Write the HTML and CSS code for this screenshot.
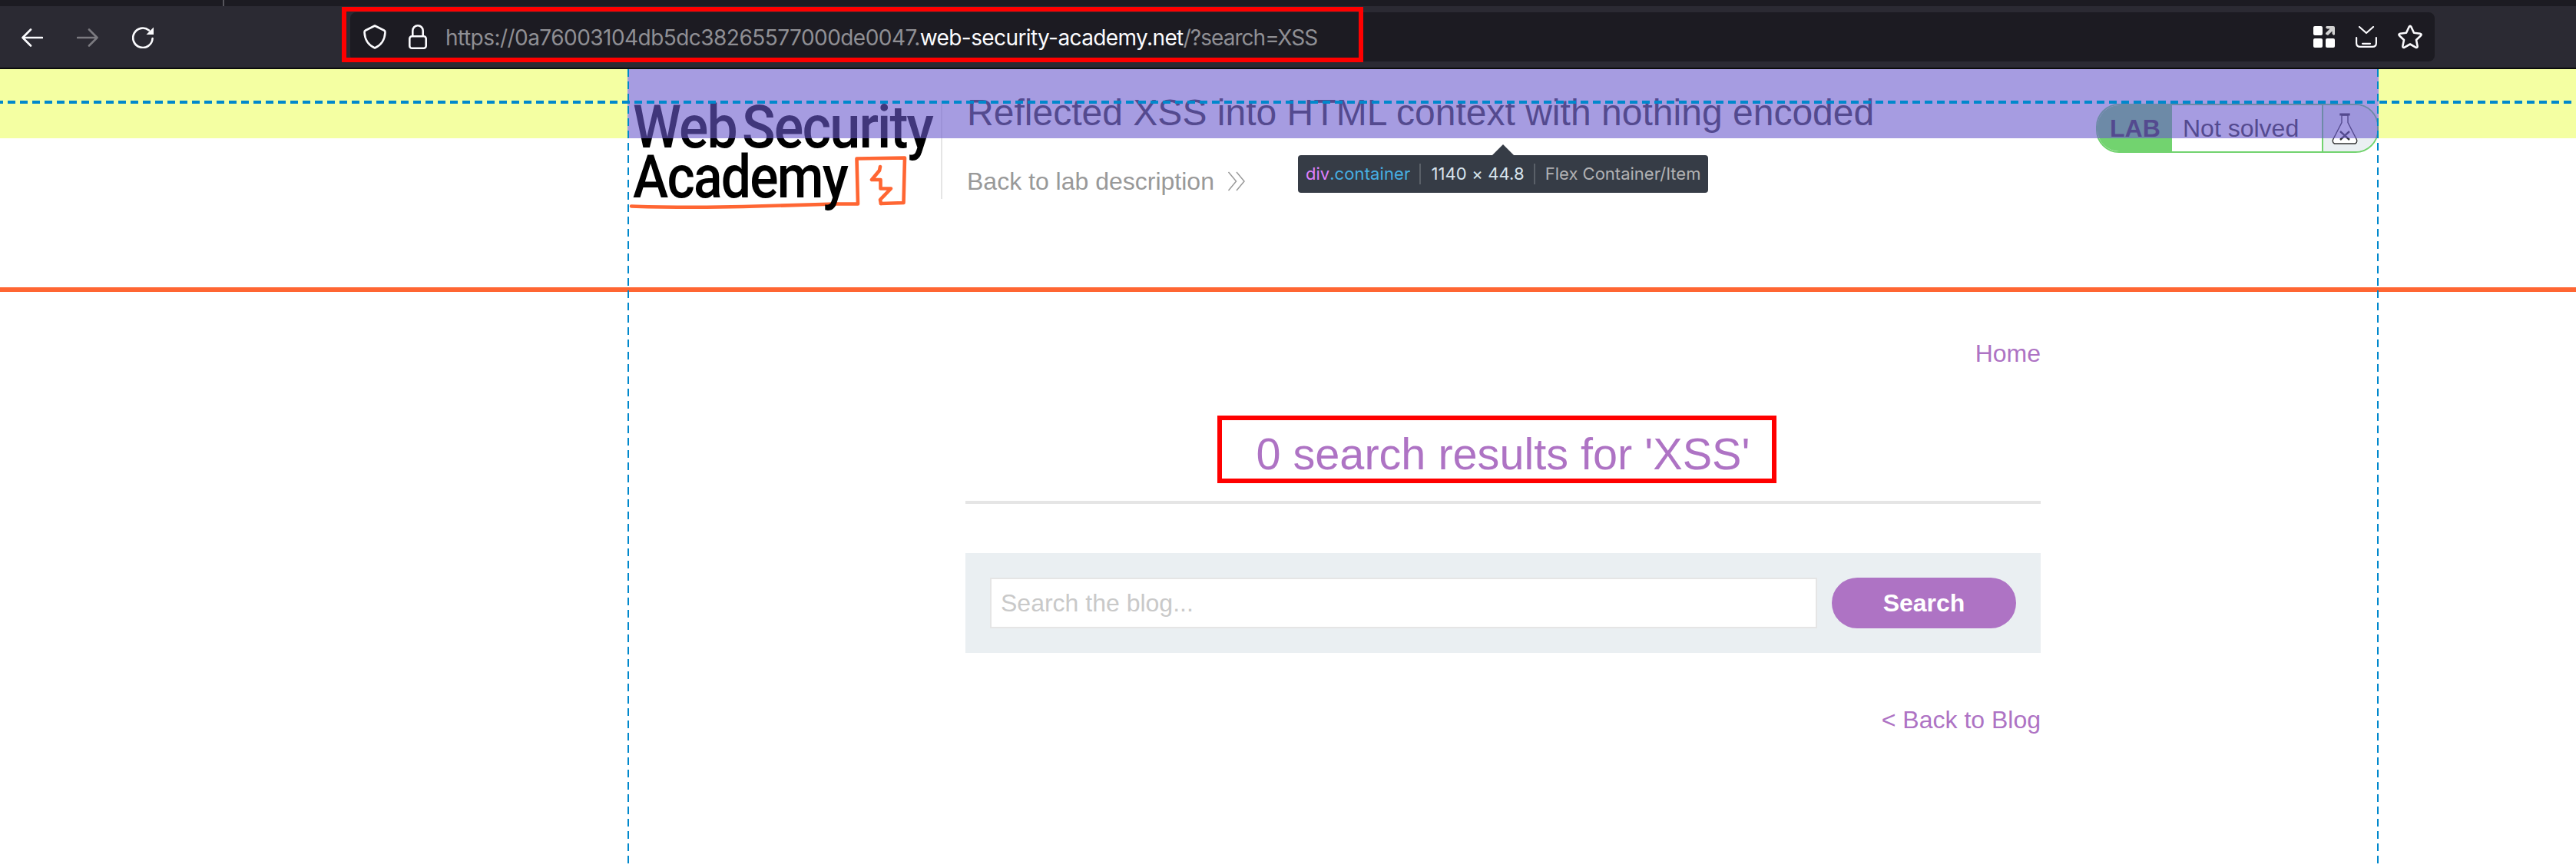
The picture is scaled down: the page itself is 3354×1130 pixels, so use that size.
FILE: index.html
```html
<!DOCTYPE html>
<html lang="en">
<head>
<meta charset="utf-8">
<title>Reflected XSS into HTML context with nothing encoded</title>
<link rel="stylesheet" href="styles.css">
</head>
<body>
<div class="tabstrip"><i class="tab-divider"></i></div>
<div class="toolbar">
  <div class="nav">
    <svg width="28" height="24" viewBox="0 0 28 24" fill="none" stroke="#fbfbfe" stroke-width="2.6" stroke-linecap="round" stroke-linejoin="round"><path d="M27 12H1.5M12 1.500L1.500 12L12 22.500"/></svg>
    <svg width="28" height="24" viewBox="0 0 28 24" fill="none" stroke="#7b7a80" stroke-width="2.6" stroke-linecap="round" stroke-linejoin="round"><path d="M1 12H26.500M16 1.500L26.500 12L16 22.500"/></svg>
    <svg width="28" height="28" viewBox="0 0 28 28" fill="none" stroke="#fbfbfe" stroke-width="2.600" stroke-linecap="round"><path d="M26.600 15A12.700 12.700 0 1 1 22 4.500"/><path d="M28 .5V10H18.500Z" fill="#fbfbfe" stroke="none"/></svg>
  </div>
  <div class="urlbar">
    <svg class="shield" width="30" height="32" viewBox="0 0 30 32" fill="none" stroke="#fbfbfe" stroke-width="2.600" stroke-linejoin="round"><path d="M15 1.500L27 7.500Q28.600 8.400 28.500 10C28 20 23 27 15 30.500C7 27 2 20 1.500 10Q1.400 8.400 3 7.500Z"/></svg>
    <svg class="lock" width="24" height="32" viewBox="0 0 24 32" fill="none" stroke="#fbfbfe" stroke-width="2.600"><rect x="1.300" y="15.300" width="21.400" height="15.400" rx="3"/><path d="M5.300 15V8a6.700 6.700 0 0 1 13.400 0v7"/></svg>
    <div class="url"><span class="u1">https://0a76003104db5dc38265577000de0047.</span><span class="u2">web-security-academy.net</span><span class="u3">/?search=XSS</span></div>
    <div class="actions">
      <svg width="28" height="28" viewBox="0 0 28 28" fill="#fff"><rect width="12" height="12" rx="2"/><rect y="16" width="12" height="12" rx="2"/><rect x="16" y="16" width="12" height="12" rx="2"/><path d="M17 0H26Q28 0 28 2V11L26.500 12L24.500 10V6.500L19 12L16 10.500V9L21.500 3.500H18L16 2Z" fill="#d0d0d0"/></svg>
      <svg width="28" height="28" viewBox="0 0 28 28" fill="none" stroke="#fbfbfe" stroke-width="2.200" stroke-linecap="round" stroke-linejoin="round"><path d="M5 1L14 9L23 1M1.100 15V22Q1.100 26.900 6 26.900H22Q26.900 26.900 26.900 22V15M9 22.800H19"/></svg>
      <svg width="32" height="32" viewBox="0 0 32 32" fill="none" stroke="#fbfbfe" stroke-width="2.600" stroke-linejoin="round"><path d="M14.600 3Q16 .7 17.400 3L21 10.800L29 11.800Q31.700 12.400 29.800 14.500L24 20L25.600 28Q25.700 30.700 23.300 29.700L16 25.500L8.700 29.700Q6.300 30.700 6.400 28L8 20L2.200 14.500Q.3 12.400 3 11.800L11 10.800Z"/></svg>
    </div>
    <div class="mark mark-url"></div>
  </div>
</div>
<div class="viewport">
  <header class="lab-header">
    <div class="container">
      <svg class="logo" width="408" height="146" viewBox="0 0 408 146">
        <g fill="none" stroke="#ff6633" stroke-linejoin="round" stroke-linecap="round">
          <path d="M5 133.500C40 135 110 135 150 134L271 130.500L300 130.500L298.500 71.500L361 70.500L359.500 129L330 130" stroke-width="4.600"/>
          <path d="M329 82L328 87L318 99H329.500V110.500H343L329 125L330 130" stroke-width="4.600"/>
        </g>
        <g class="logo-text">
          <text x="7" y="57" textLength="135" lengthAdjust="spacingAndGlyphs">Web</text>
          <text x="149" y="57" textLength="248" lengthAdjust="spacingAndGlyphs">Security</text>
          <text x="7" y="122" textLength="279" lengthAdjust="spacingAndGlyphs">Academy</text>
        </g>
      </svg>
      <div class="title-area">
        <h2>Reflected XSS into HTML context with nothing encoded</h2>
        <a class="back">Back to lab description<svg width="24" height="26" viewBox="0 0 24 26" fill="none" stroke="#999" stroke-width="1.500"><path d="M1.500 1L11.500 13L1.500 25M12 1L22 13L12 25"/></svg></a>
      </div>
      <div class="status">
        <b>LAB</b><span>Not solved</span>
        <i class="flask"><svg width="34" height="42" viewBox="0 0 34 42" fill="none" stroke="#333" stroke-width="1.400"><path fill="#fff" d="M3.500 40Q.5 38.500 1.500 35L13 12.500V3H21V12.500L32.500 35Q33.500 38.500 30.500 40Z"/><path fill="#fff" d="M11 1.200H23V2.800H11Z"/><path d="M11 24L23 35M23 24L11 35" stroke-width="2.400"/></svg></i>
      </div>
    </div>
  </header>
  <main>
    <nav><a>Home</a></nav>
    <section class="results"><h1>0 search results for 'XSS'</h1><div class="mark mark-results"></div></section>
    <form class="search"><div class="field">Search the blog...</div><div class="button">Search</div></form>
    <div class="backlink"><a>&lt; Back to Blog</a></div>
  </main>
  <div class="overlay">
    <div class="hl-margin"></div><div class="hl-content"></div>
    <div class="guide-h"></div><div class="guide-v guide-l"></div><div class="guide-v guide-r"></div>
    <div class="infobar"><span class="tag">div</span><span class="cls">.container</span><span class="dim">1140 × 44.8</span><span class="kind">Flex Container/Item</span></div>
  </div>
</div>
</body>
</html>
```
FILE: styles.css
```css
* { box-sizing: border-box; }
body { margin: 0; height: 1130px; overflow: hidden; background: #fff; font: 32px/36px "Liberation Sans", Arial, sans-serif; color: #333; }
svg { display: block; flex: none; }
h1, h2 { margin: 0; font-weight: 400; }

.tabstrip { height: 8px; background: #1c1b22; display: flex; padding-left: 290px; }
.tab-divider { width: 2px; background: #56555c; }
.toolbar { height: 82px; background: #2b2a33; border-bottom: 2px solid #0c0c0d; display: flex; align-items: center; }
.nav { width: 456px; padding-left: 28px; display: flex; gap: 44px; align-items: center; padding-top: 2px; }
.urlbar { position: relative; width: 2714px; height: 64px; border-radius: 8px; background: #1c1b22; display: flex; align-items: center; padding: 0 16px 0 17px; font: 28px/34px Inter, sans-serif; }
.lock { margin-left: 29px; }
.url { margin-left: 24px; padding-top: 2px; color: #8f8f94; white-space: nowrap; }
.u1 { letter-spacing: -.54px; }
.u2 { color: #fbfbfe; letter-spacing: -.6px; }
.u3 { letter-spacing: -.95px; }
.actions { margin-left: auto; display: flex; align-items: center; gap: 27px; }
.mark { position: absolute; border: 6px solid #f00; }
.mark-url { left: -11px; top: -7px; width: 1330px; height: 72px; }

.viewport { position: relative; height: 1040px; overflow: hidden; }
.lab-header { height: 290px; border-bottom: 6px solid #ff6633; }
.container { width: 2280px; margin-left: 817px; padding-top: 45px; display: flex; align-items: flex-start; }
.logo { overflow: visible; }
.logo-text { font: 500 77px Roboto, sans-serif; letter-spacing: -2px; fill: #000; }
.title-area { border-left: 2px solid #e5e5e5; padding-left: 32px; height: 124px; }
.title-area h2 { font-size: 48px; line-height: 56px; margin-top: -16px; white-space: nowrap; letter-spacing: .02px; }
.back { display: flex; align-items: center; color: #999; margin-top: 43px; white-space: nowrap; }
.back svg { margin-left: 17px; }
.status { margin-left: auto; width: 368px; height: 64px; border: 2px solid #72d36f; border-radius: 30px; overflow: hidden; display: flex; line-height: 60px; background: #fff; }
.status b { width: 97px; padding-left: 16px; background: #72d36f; }
.status span { width: 195px; padding-left: 14px; }
.flask { flex: 1; border-left: 2px solid #72d36f; background: #eaeff2; padding: 10px 0 0 11px; }

main { width: 1400px; margin-left: 1257px; color: #ae73c4; }
nav, .backlink { text-align: right; }
nav { padding-top: 62px; }
.results { position: relative; margin-top: 60px; height: 118px; border-bottom: 4px solid #e5e5e5; text-align: center; }
h1 { font-size: 57.600px; line-height: 66px; padding-top: 20px; }
.mark-results { left: 328px; top: 3px; width: 728px; height: 88px; }
.search { margin-top: 64px; height: 130px; background: #eaeff2; padding: 32px; display: flex; gap: 19px; }
.field { width: 1077px; height: 66px; border: 2px solid #e5e5e5; background: #fff; color: #c9c9c9; padding-left: 12px; line-height: 62px; }
.button { flex: 1; height: 66px; border-radius: 33px; background: #ae73c4; color: #fff; font-weight: 700; line-height: 66px; text-align: center; }
.backlink { margin-top: 69px; }

.overlay, .overlay > * { position: absolute; }
.overlay { inset: 0; }
.hl-margin { left: 0; top: 0; width: 100%; height: 90px; background: linear-gradient(90deg, #f4ffa2 817px, transparent 817px 3097px, #f4ffa2 3097px); }
.hl-content { left: 817px; top: 0; width: 2280px; height: 90px; background: rgba(106, 90, 205, .6); }
.guide-h { left: -6px; top: 41px; width: 3360px; height: 4px; background: repeating-linear-gradient(90deg, #08c 0 10px, transparent 10px 16px); }
.guide-v { top: 0; width: 2px; height: 100%; background: repeating-linear-gradient(180deg, #08c 0 10px, transparent 10px 16px); }
.guide-l { left: 817px; }
.guide-r { left: 3095px; }
.infobar { left: 1690px; top: 112px; width: 534px; height: 49px; border-radius: 4px; background: #363c46; display: flex; align-items: center; padding-left: 10px; font: 22px/27px Inter, sans-serif; white-space: nowrap; }
.infobar::before { content: ""; position: absolute; left: 253px; top: -14px; border: 14px solid transparent; border-top: 0; border-bottom-color: #363c46; }
.tag { color: #df80ff; }
.cls { color: #46afe3; letter-spacing: .1px; }
.dim, .kind { margin-left: 12px; border-left: 2px solid #5a6068; padding-left: 13px; }
.dim { color: #d7e4ee; letter-spacing: .12px; }
.kind { color: #b1b1b3; }
```
